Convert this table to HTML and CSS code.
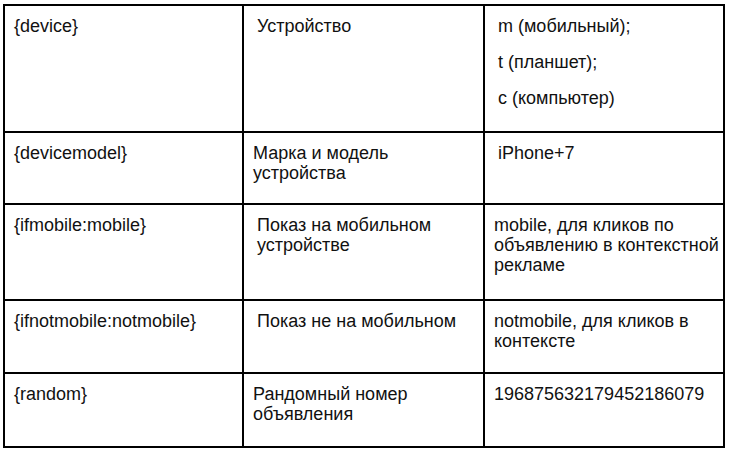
FILE: index.html
```html
<!DOCTYPE html>
<html lang="ru">
<head>
<meta charset="utf-8">
<link rel="stylesheet" href="styles.css">
</head>
<body>
<table class="grid">
  <colgroup>
    <col class="w1">
    <col class="w2">
    <col class="w3">
  </colgroup>
  <tr class="r1">
    <td>{device}</td>
    <td class="in">Устройство</td>
    <td class="in"><p>m (мобильный);</p><p>t (планшет);</p><p>c (компьютер)</p></td>
  </tr>
  <tr class="r2">
    <td>{devicemodel}</td>
    <td>Марка и модель<br>устройства</td>
    <td class="in">iPhone+7</td>
  </tr>
  <tr class="r3">
    <td>{ifmobile:mobile}</td>
    <td class="in">Показ на мобильном<br>устройстве</td>
    <td>mobile, для кликов по<br>объявлению в контекстной<br>рекламе</td>
  </tr>
  <tr class="r4">
    <td>{ifnotmobile:notmobile}</td>
    <td class="in">Показ не на мобильном</td>
    <td>notmobile, для кликов в<br>контексте</td>
  </tr>
  <tr class="r5">
    <td>{random}</td>
    <td>Рандомный номер<br>объявления</td>
    <td>196875632179452186079</td>
  </tr>
</table>
</body>
</html>
```
FILE: styles.css
```css
html, body {
  margin: 0;
  padding: 0;
  background: #fff;
}
body {
  padding: 4px 0 0 3px;
  font-family: "Liberation Sans", Arial, sans-serif;
  font-size: 18px;
  line-height: 20px;
  color: #111;
}
.grid {
  border-collapse: collapse;
  table-layout: fixed;
  width: 722px;
}
.w1 { width: 239px; }
.w2 { width: 241px; }
.w3 { width: 240px; }
.grid td {
  border: 2px solid #000;
  vertical-align: top;
  padding: 10px 4px 0 9px;
  white-space: nowrap;
}
.grid td.in { padding-left: 13px; }
.r1 { height: 127px; }
.r2 { height: 72px; }
.r3 { height: 96px; }
.r4 { height: 73px; }
.r5 { height: 74px; }
.grid p { margin: 0 0 16px 0; }
```
